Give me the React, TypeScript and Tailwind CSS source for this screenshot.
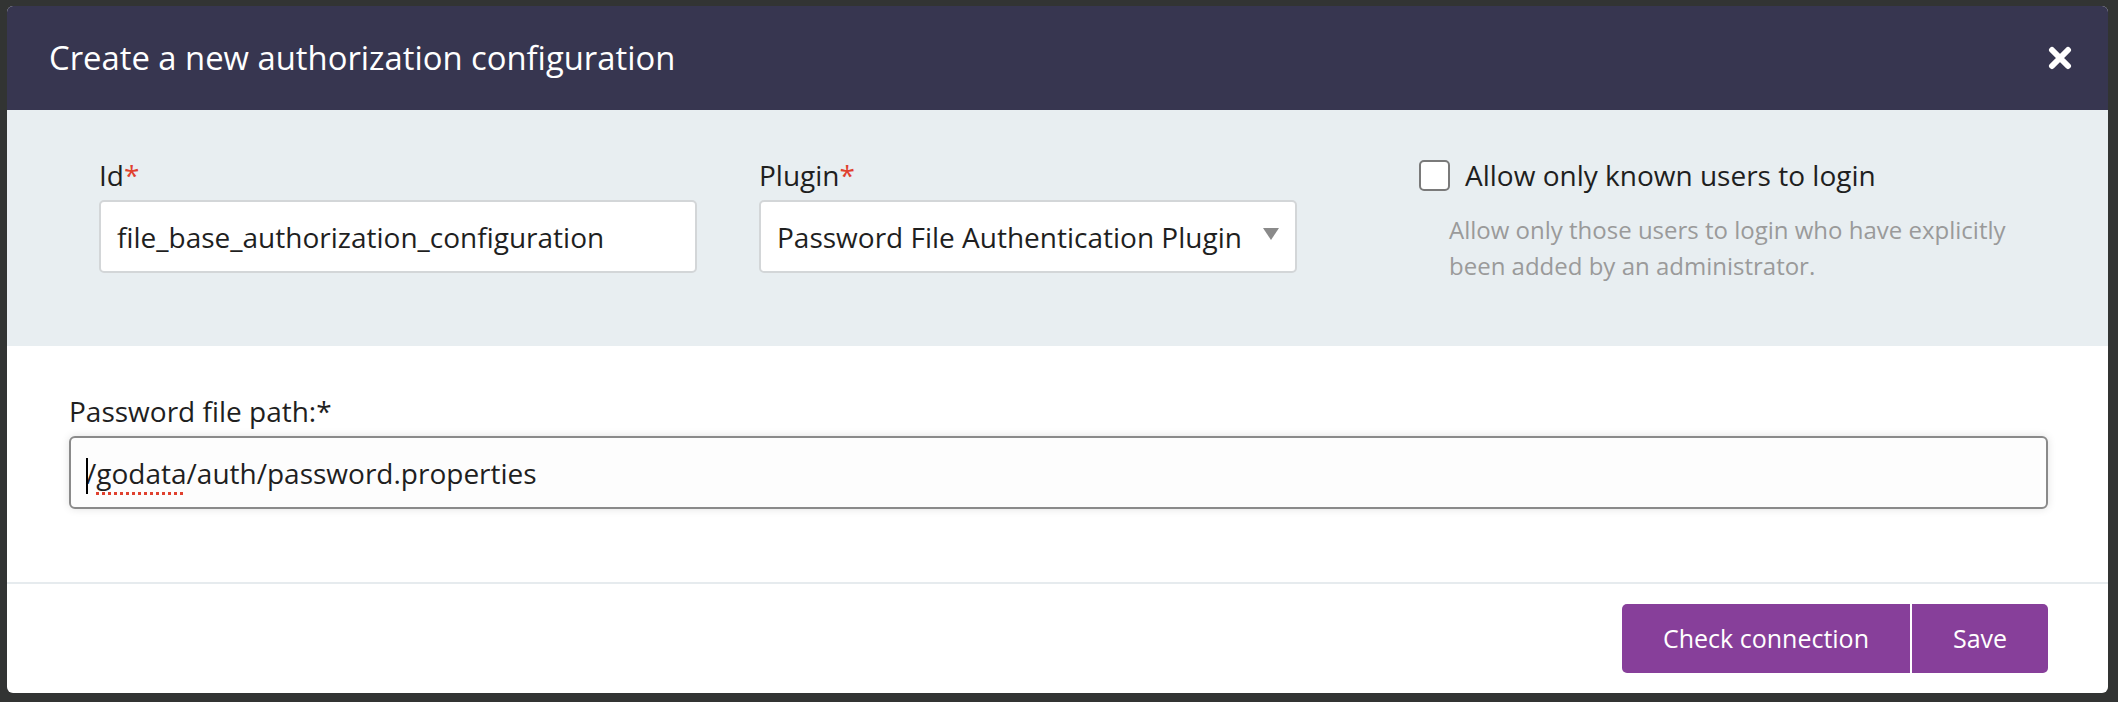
function CloseIcon() {
  return (
    <svg width="24" height="24" viewBox="0 0 24 24" className="shrink-0">
      <path d="M4 4 L20 20 M20 4 L4 20" stroke="#ffffff" strokeWidth="6" strokeLinecap="round" fill="none" />
    </svg>
  );
}

function Required() {
  return <span className="text-[#e0412f]">*</span>;
}

export default function App() {
  return (
    <div className="h-[702px] w-[2118px] bg-[#323433] pb-[9px] pl-[7px] pr-[10px] pt-[6px] font-['Open_Sans',sans-serif] text-[#1f1f1f]">
      <div className="flex h-full flex-col overflow-hidden rounded-[6px] bg-white">
        <header className="flex h-[104px] shrink-0 items-center justify-between bg-[#373650] pl-[42px] pr-[36px]">
          <h1 className="text-[32.8px] text-white">Create a new authorization configuration</h1>
          <CloseIcon />
        </header>

        <section className="grid h-[236px] shrink-0 grid-cols-[660px_660px_1fr] bg-[#e8eef1] pl-[92px] pt-[46px]">
          <div>
            <label className="block text-[28px] leading-[39px]">
              Id<Required />
            </label>
            <div className="mt-[5px] flex h-[73px] w-[598px] items-center rounded-[5px] border-2 border-[#d3d6d8] bg-white pl-[16px] text-[28px]">
              file_base_authorization_configuration
            </div>
          </div>

          <div>
            <label className="block text-[28px] leading-[39px]">
              Plugin<Required />
            </label>
            <div className="mt-[5px] flex h-[73px] w-[538px] items-center justify-between rounded-[5px] border-2 border-[#d3d6d8] bg-white pl-[16px] pr-[14px] text-[28px]">
              <span>Password File Authentication Plugin</span>
              <svg width="20" height="14" viewBox="0 0 20 14" className="-mt-[6px]">
                <path d="M2 1 L18 1 L10 13 Z" fill="#8a8a8a" />
              </svg>
            </div>
          </div>

          <div>
            <div className="flex items-center gap-[15px]">
              <span className="block h-[31px] w-[31px] rounded-[5px] border-2 border-[#7a7a7a] bg-white" />
              <span className="text-[28px] leading-[39px]">Allow only known users to login</span>
            </div>
            <p className="ml-[30px] mt-[17px] w-[600px] text-[24px] leading-[36px] text-[#9a9a9a]">
              Allow only those users to login who have explicitly been added by an administrator.
            </p>
          </div>
        </section>

        <section className="h-[236px] shrink-0 pl-[62px] pr-[60px] pt-[46px]">
          <label className="block text-[28px] leading-[39px]">Password file path:*</label>
          <div className="mt-[5px] flex h-[73px] items-center rounded-[6px] border-2 border-[#8a8a8a] bg-[#fdfdfd] pl-[15px] text-[28px] shadow-[0_0_8px_rgba(0,0,0,0.12)]">
            <span className="mr-[-2px] inline-block h-[36px] w-[2px] translate-y-[3px] bg-black" />
            <span>
              /<span className="underline decoration-[#e0412f] decoration-dotted decoration-[3px] underline-offset-[8px]">godata</span>/auth/password.properties
            </span>
          </div>
        </section>

        <footer className="flex flex-1 items-start justify-end gap-[2px] border-t-2 border-[#e6ebee] pr-[60px] pt-[20px]">
          <button className="h-[69px] w-[288px] rounded-l-[5px] bg-[#873f9a] text-[25px] text-white">
            Check connection
          </button>
          <button className="h-[69px] w-[136px] rounded-r-[5px] bg-[#873f9a] text-[25px] text-white">
            Save
          </button>
        </footer>
      </div>
    </div>
  );
}
